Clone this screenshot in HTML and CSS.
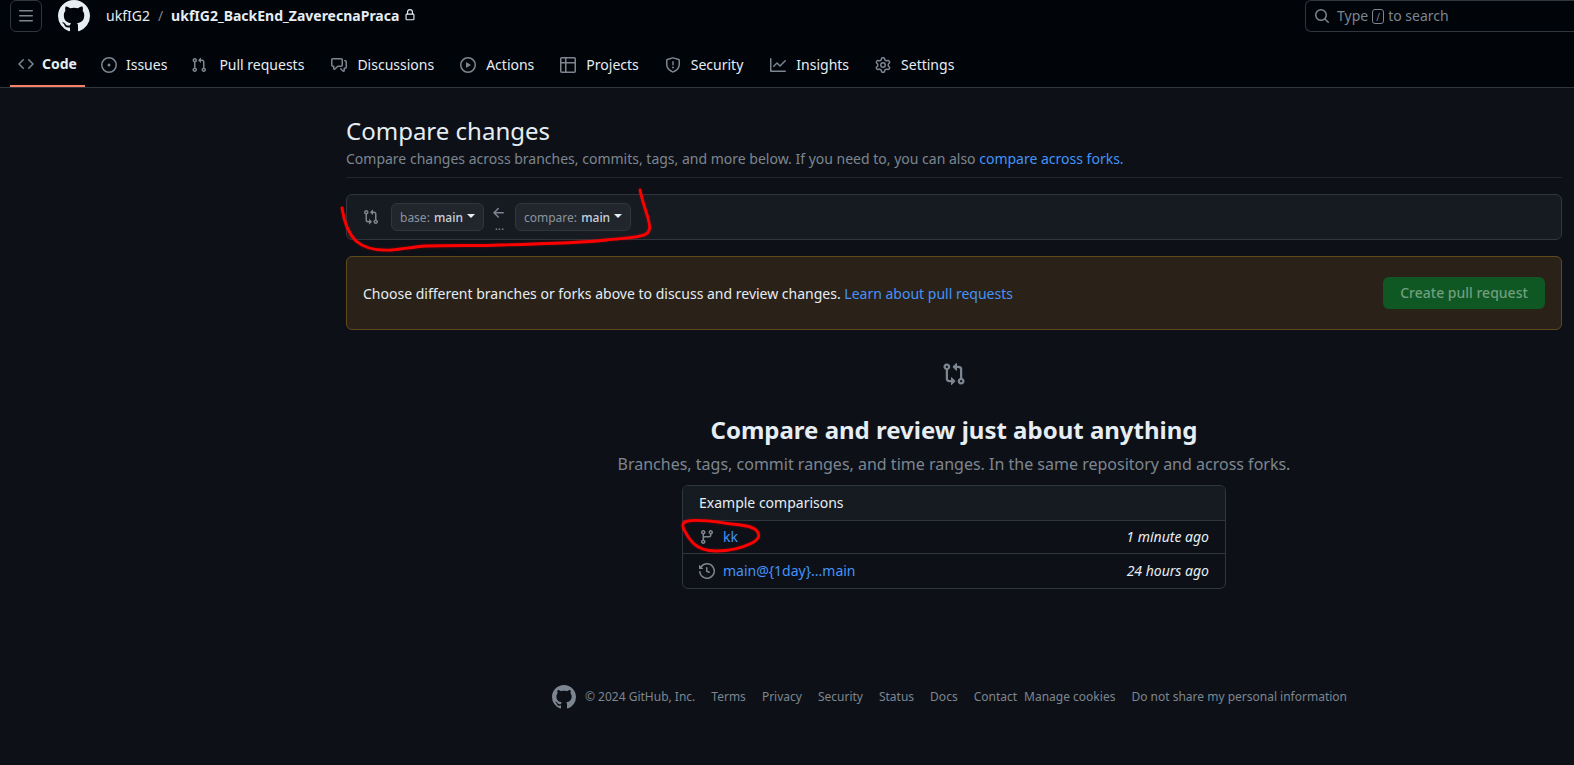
FILE: index.html
```html
<!DOCTYPE html>
<html lang="en">
<head>
  <meta charset="UTF-8" />
  <title>Compare changes</title>
  <link rel="stylesheet" href="styles.css">
</head>
<body>
  <svg class="icon-defs" width="0" height="0">
    <symbol id="i-github" viewBox="0 0 16 16"><path d="M8 0c4.42 0 8 3.58 8 8a8.013 8.013 0 0 1-5.45 7.59c-.4.08-.55-.17-.55-.38 0-.27.01-1.13.01-2.2 0-.75-.25-1.23-.54-1.48 1.78-.2 3.65-.88 3.65-3.95 0-.88-.31-1.59-.82-2.15.08-.2.36-1.02-.08-2.12 0 0-.67-.22-2.2.82-.64-.18-1.32-.27-2-.27-.68 0-1.36.09-2 .27-1.53-1.03-2.2-.82-2.2-.82-.44 1.1-.16 1.92-.08 2.12-.51.56-.82 1.28-.82 2.15 0 3.06 1.86 3.75 3.64 3.95-.23.2-.44.55-.51 1.07-.46.21-1.61.55-2.33-.66-.15-.24-.6-.83-1.23-.82-.67.01-.27.38.01.53.34.19.73.9.82 1.13.16.45.68 1.31 2.69.94 0 .67.01 1.3.01 1.49 0 .21-.15.45-.55.38A7.995 7.995 0 0 1 0 8c0-4.42 3.58-8 8-8Z"/></symbol>
    <symbol id="i-bars" viewBox="0 0 16 16"><path d="M1 2.75A.75.75 0 0 1 1.75 2h12.5a.75.75 0 0 1 0 1.5H1.75A.75.75 0 0 1 1 2.75Zm0 5A.75.75 0 0 1 1.75 7h12.5a.75.75 0 0 1 0 1.5H1.75A.75.75 0 0 1 1 7.75ZM1.75 12h12.5a.75.75 0 0 1 0 1.5H1.75a.75.75 0 0 1 0-1.5Z"/></symbol>
    <symbol id="i-lock" viewBox="0 0 16 16"><path d="M4 4a4 4 0 0 1 8 0v2h.25c.966 0 1.75.784 1.75 1.75v5.5A1.75 1.75 0 0 1 12.25 15h-8.5A1.75 1.75 0 0 1 2 13.25v-5.5C2 6.784 2.784 6 3.75 6H4Zm8.25 3.5h-8.5a.25.25 0 0 0-.25.25v5.5c0 .138.112.25.25.25h8.5a.25.25 0 0 0 .25-.25v-5.5a.25.25 0 0 0-.25-.25ZM10.5 6V4a2.5 2.5 0 1 0-5 0v2Z"/></symbol>
    <symbol id="i-search" viewBox="0 0 16 16"><path d="M10.68 11.74a6 6 0 0 1-7.922-8.982 6 6 0 0 1 8.982 7.922l3.04 3.04a.749.749 0 0 1-.326 1.275.749.749 0 0 1-.734-.215ZM11.5 7a4.499 4.499 0 1 0-8.997 0A4.499 4.499 0 0 0 11.5 7Z"/></symbol>
    <symbol id="i-code" viewBox="0 0 16 16"><path d="m11.28 3.22 4.25 4.25a.75.75 0 0 1 0 1.06l-4.25 4.25a.749.749 0 0 1-1.275-.326.749.749 0 0 1 .215-.734L13.94 8l-3.72-3.72a.749.749 0 0 1 .326-1.275.749.749 0 0 1 .734.215Zm-6.56 0a.751.751 0 0 1 1.042.018.751.751 0 0 1 .018 1.042L2.06 8l3.72 3.72a.749.749 0 0 1-.326 1.275.749.749 0 0 1-.734-.215L.47 8.53a.75.75 0 0 1 0-1.06Z"/></symbol>
    <symbol id="i-issue" viewBox="0 0 16 16"><path d="M8 9.5a1.5 1.5 0 1 0 0-3 1.5 1.5 0 0 0 0 3Z"/><path d="M8 0a8 8 0 1 1 0 16A8 8 0 0 1 8 0ZM1.5 8a6.5 6.5 0 1 0 13 0 6.5 6.5 0 0 0-13 0Z"/></symbol>
    <symbol id="i-pull" viewBox="0 0 16 16"><path d="M1.5 3.25a2.25 2.25 0 1 1 3 2.122v5.256a2.251 2.251 0 1 1-1.5 0V5.372A2.25 2.25 0 0 1 1.5 3.25Zm5.677-.177L9.573.677A.25.25 0 0 1 10 .854V2.5h1A2.5 2.5 0 0 1 13.5 5v5.628a2.251 2.251 0 1 1-1.5 0V5a1 1 0 0 0-1-1h-1v1.646a.25.25 0 0 1-.427.177L7.177 3.427a.25.25 0 0 1 0-.354ZM3.75 2.5a.75.75 0 1 0 0 1.5.75.75 0 0 0 0-1.5Zm0 9.5a.75.75 0 1 0 0 1.5.75.75 0 0 0 0-1.5Zm8.25.75a.75.75 0 1 0 1.5 0 .75.75 0 0 0-1.5 0Z"/></symbol>
    <symbol id="i-discuss" viewBox="0 0 16 16"><path d="M1.75 1h8.5c.966 0 1.75.784 1.75 1.75v5.5A1.75 1.75 0 0 1 10.25 10H7.061l-2.574 2.573A1.458 1.458 0 0 1 2 11.543V10h-.25A1.75 1.75 0 0 1 0 8.25v-5.5C0 1.784.784 1 1.75 1ZM1.5 2.75v5.5c0 .138.112.25.25.25h1a.75.75 0 0 1 .75.75v2.19l2.72-2.72a.749.749 0 0 1 .53-.22h3.5a.25.25 0 0 0 .25-.25v-5.5a.25.25 0 0 0-.25-.25h-8.5a.25.25 0 0 0-.25.25Zm13 2a.25.25 0 0 0-.25-.25h-.5a.75.75 0 0 1 0-1.5h.5c.966 0 1.75.784 1.75 1.75v5.5A1.75 1.75 0 0 1 14.25 12H14v1.543a1.458 1.458 0 0 1-2.487 1.03L9.22 12.28a.749.749 0 0 1 .326-1.275.749.749 0 0 1 .734.215l2.22 2.22v-2.19a.75.75 0 0 1 .75-.75h1a.25.25 0 0 0 .25-.25Z"/></symbol>
    <symbol id="i-play" viewBox="0 0 16 16"><path d="M8 0a8 8 0 1 1 0 16A8 8 0 0 1 8 0ZM1.5 8a6.5 6.5 0 1 0 13 0 6.5 6.5 0 0 0-13 0Zm4.879-2.773 4.264 2.559a.25.25 0 0 1 0 .428l-4.264 2.559A.25.25 0 0 1 6 10.559V5.442a.25.25 0 0 1 .379-.215Z"/></symbol>
    <symbol id="i-table" viewBox="0 0 16 16"><path d="M0 1.75C0 .784.784 0 1.75 0h12.5C15.216 0 16 .784 16 1.75v12.5A1.75 1.75 0 0 1 14.25 16H1.75A1.75 1.75 0 0 1 0 14.25ZM6.5 6.5v8h7.75a.25.25 0 0 0 .25-.25V6.5Zm8-1.5V1.75a.25.25 0 0 0-.25-.25H6.5V5Zm-13 1.5v7.75c0 .138.112.25.25.25H5v-8ZM5 5V1.5H1.75a.25.25 0 0 0-.25.25V5Z"/></symbol>
    <symbol id="i-shield" viewBox="0 0 16 16"><path d="M7.467.133a1.748 1.748 0 0 1 1.066 0l5.25 1.68A1.75 1.75 0 0 1 15 3.48V7c0 1.566-.32 3.182-1.303 4.682-.983 1.498-2.585 2.813-5.032 3.855a1.697 1.697 0 0 1-1.33 0c-2.447-1.042-4.049-2.357-5.032-3.855C1.32 10.182 1 8.566 1 7V3.48a1.75 1.75 0 0 1 1.217-1.667Zm.61 1.429a.25.25 0 0 0-.153 0l-5.25 1.68a.25.25 0 0 0-.174.238V7c0 1.358.275 2.666 1.057 3.86.784 1.194 2.121 2.34 4.366 3.297a.196.196 0 0 0 .154 0c2.245-.956 3.582-2.104 4.366-3.298C13.225 9.666 13.5 8.36 13.5 7V3.48a.251.251 0 0 0-.174-.237l-5.25-1.68ZM8.75 4.75v3a.75.75 0 0 1-1.5 0v-3a.75.75 0 0 1 1.5 0ZM9 10.5a1 1 0 1 1-2 0 1 1 0 0 1 2 0Z"/></symbol>
    <symbol id="i-graph" viewBox="0 0 16 16"><path d="M1.5 1.75V13.5h13.75a.75.75 0 0 1 0 1.5H.75a.75.75 0 0 1-.75-.75V1.75a.75.75 0 0 1 1.5 0Zm14.28 2.53-5.25 5.25a.75.75 0 0 1-1.06 0L7 7.06 4.28 9.78a.751.751 0 0 1-1.042-.018.751.751 0 0 1-.018-1.042l3.25-3.25a.75.75 0 0 1 1.06 0L10 7.94l4.72-4.72a.751.751 0 0 1 1.042.018.751.751 0 0 1 .018 1.042Z"/></symbol>
    <symbol id="i-gear" viewBox="0 0 16 16"><path d="M8 0a8.2 8.2 0 0 1 .701.031C9.444.095 9.99.645 10.16 1.29l.288 1.107c.018.066.079.158.212.224.231.114.454.243.668.386.123.082.233.09.299.071l1.103-.303c.644-.176 1.392.021 1.82.63.27.385.506.792.704 1.218.315.675.111 1.422-.364 1.891l-.814.806c-.049.048-.098.147-.088.294.016.257.016.515 0 .772-.01.147.038.246.088.294l.814.806c.475.469.679 1.216.364 1.891a7.977 7.977 0 0 1-.704 1.217c-.428.61-1.176.807-1.82.63l-1.102-.302c-.067-.019-.177-.011-.3.071a5.909 5.909 0 0 1-.668.386c-.133.066-.194.158-.211.224l-.29 1.106c-.168.646-.715 1.196-1.458 1.26a8.006 8.006 0 0 1-1.402 0c-.743-.064-1.289-.614-1.458-1.26l-.289-1.106c-.018-.066-.079-.158-.212-.224a5.738 5.738 0 0 1-.668-.386c-.123-.082-.233-.09-.299-.071l-1.103.303c-.644.176-1.392-.021-1.82-.63a8.12 8.12 0 0 1-.704-1.218c-.315-.675-.111-1.422.363-1.891l.815-.806c.05-.048.098-.147.088-.294a6.214 6.214 0 0 1 0-.772c.01-.147-.038-.246-.088-.294l-.815-.806C.635 6.045.431 5.298.746 4.623a7.92 7.92 0 0 1 .704-1.217c.428-.61 1.176-.807 1.82-.63l1.102.302c.067.019.177.011.3-.071.214-.143.437-.272.668-.386.133-.066.194-.158.211-.224l.29-1.106C6.009.645 6.556.095 7.299.03 7.53.01 7.764 0 8 0Zm-.571 1.525c-.036.003-.108.036-.137.146l-.289 1.105c-.147.561-.549.967-.998 1.189-.173.086-.34.183-.5.29-.417.278-.97.423-1.529.27l-1.103-.303c-.109-.03-.175.016-.195.045-.22.312-.412.644-.573.99-.014.031-.021.11.059.19l.815.806c.411.406.562.957.53 1.456a4.709 4.709 0 0 0 0 .582c.032.499-.119 1.05-.53 1.456l-.815.806c-.081.08-.073.159-.059.19.162.346.353.677.573.989.02.03.085.076.195.046l1.102-.303c.56-.153 1.113-.008 1.53.27.161.107.328.204.501.29.447.222.85.629.997 1.189l.289 1.105c.029.109.101.143.137.146a6.6 6.6 0 0 0 1.142 0c.036-.003.108-.036.137-.146l.289-1.105c.147-.561.549-.967.998-1.189.173-.086.34-.183.5-.29.417-.278.97-.423 1.529-.27l1.103.303c.109.029.175-.016.195-.045.22-.313.411-.644.573-.99.014-.031.021-.11-.059-.19l-.815-.806c-.411-.406-.562-.957-.53-1.456a4.709 4.709 0 0 0 0-.582c-.032-.499.119-1.05.53-1.456l.815-.806c.081-.08.073-.159.059-.19a6.464 6.464 0 0 0-.573-.989c-.02-.03-.085-.076-.195-.046l-1.102.303c-.56.153-1.113.008-1.53-.27a4.44 4.44 0 0 0-.501-.29c-.447-.222-.85-.629-.997-1.189l-.289-1.105c-.029-.11-.101-.143-.137-.146a6.6 6.6 0 0 0-1.142 0ZM11 8a3 3 0 1 1-6 0 3 3 0 0 1 6 0ZM9.5 8a1.5 1.5 0 1 0-3.001.001A1.5 1.5 0 0 0 9.5 8Z"/></symbol>
    <symbol id="i-compare" viewBox="0 0 16 16"><path d="M9.573.677A.25.25 0 0 1 10 .854V2.5h1A2.5 2.5 0 0 1 13.5 5v5.628a2.251 2.251 0 1 1-1.5 0V5a1 1 0 0 0-1-1h-1v1.646a.25.25 0 0 1-.427.177L7.177 3.427a.25.25 0 0 1 0-.354ZM6 12v-1.646a.25.25 0 0 1 .427-.177l2.396 2.396a.25.25 0 0 1 0 .354l-2.396 2.396A.25.25 0 0 1 6 15.146V13.5H5A2.5 2.5 0 0 1 2.5 11V5.372a2.25 2.25 0 1 1 1.5 0V11a1 1 0 0 0 1 1ZM4 3.25a.75.75 0 1 0-1.5 0 .75.75 0 0 0 1.5 0ZM12.75 12a.75.75 0 1 0 0 1.5.75.75 0 0 0 0-1.5Z"/></symbol>
    <symbol id="i-arrow" viewBox="0 0 16 16"><path d="M7.78 12.53a.75.75 0 0 1-1.06 0L2.47 8.28a.75.75 0 0 1 0-1.06l4.25-4.25a.751.751 0 0 1 1.042.018.751.751 0 0 1 .018 1.042L4.81 7h7.44a.75.75 0 0 1 0 1.5H4.81l2.97 2.97a.75.75 0 0 1 0 1.06Z"/></symbol>
    <symbol id="i-branch" viewBox="0 0 16 16"><path d="M9.5 3.25a2.25 2.25 0 1 1 3 2.122V6A2.5 2.5 0 0 1 10 8.5H6a1 1 0 0 0-1 1v1.128a2.251 2.251 0 1 1-1.5 0V5.372a2.25 2.25 0 1 1 1.5 0v1.836A2.493 2.493 0 0 1 6 7h4a1 1 0 0 0 1-1v-.628A2.25 2.25 0 0 1 9.5 3.25Zm-6 0a.75.75 0 1 0 1.5 0 .75.75 0 0 0-1.5 0Zm8.25-.75a.75.75 0 1 0 0 1.5.75.75 0 0 0 0-1.5ZM4.25 12a.75.75 0 1 0 0 1.5.75.75 0 0 0 0-1.5Z"/></symbol>
    <symbol id="i-history" viewBox="0 0 16 16"><path d="m.427 1.927 1.215 1.215a8.002 8.002 0 1 1-1.6 5.685.75.75 0 1 1 1.493-.154 6.5 6.5 0 1 0 1.18-4.458l1.358 1.358A.25.25 0 0 1 3.896 6H.25A.25.25 0 0 1 0 5.75V2.104a.25.25 0 0 1 .427-.177ZM7.75 4a.75.75 0 0 1 .75.75v2.992l2.028.812a.75.75 0 0 1-.557 1.392l-2.5-1A.751.751 0 0 1 7 8.25v-3.5A.75.75 0 0 1 7.75 4Z"/></symbol>
  </svg>

  <header class="header">
    <div class="topbar">
      <button class="menu-btn"><svg class="icon"><use href="#i-bars"/></svg></button>
      <svg class="logo"><use href="#i-github"/></svg>
      <div class="crumbs">
        <a class="owner">ukfIG2</a>
        <span class="slash">/</span>
        <a class="repo">ukfIG2_BackEnd_ZaverecnaPraca</a>
        <svg class="lock"><use href="#i-lock"/></svg>
      </div>
      <div class="search">
        <svg class="icon"><use href="#i-search"/></svg>
        <span>Type</span><kbd class="slash-key">/</kbd><span>to search</span>
      </div>
    </div>
    <nav class="tabs">
      <a class="tab active"><svg class="icon"><use href="#i-code"/></svg>Code</a>
      <a class="tab tab-issues"><svg class="icon"><use href="#i-issue"/></svg>Issues</a>
      <a class="tab tab-pulls"><svg class="icon"><use href="#i-pull"/></svg>Pull requests</a>
      <a class="tab tab-nudge"><svg class="icon"><use href="#i-discuss"/></svg>Discussions</a>
      <a class="tab"><svg class="icon"><use href="#i-play"/></svg>Actions</a>
      <a class="tab"><svg class="icon"><use href="#i-table"/></svg>Projects</a>
      <a class="tab"><svg class="icon"><use href="#i-shield"/></svg>Security</a>
      <a class="tab tab-nudge"><svg class="icon"><use href="#i-graph"/></svg>Insights</a>
      <a class="tab"><svg class="icon"><use href="#i-gear"/></svg>Settings</a>
    </nav>
  </header>

  <main class="main">
    <div class="subhead">
      <h1>Compare changes</h1>
      <p>Compare changes across branches, commits, tags, and more below. If you need to, you can also <a class="link">compare across forks.</a></p>
    </div>

    <div class="range-box">
      <svg class="icon range-icon"><use href="#i-compare"/></svg>
      <button class="ref-btn">base: <b>main</b><i class="caret"></i></button>
      <div class="range-sep">
        <svg class="icon"><use href="#i-arrow"/></svg>
        <span>...</span>
      </div>
      <button class="ref-btn">compare: <b>main</b><i class="caret"></i></button>
    </div>

    <div class="flash">
      <p>Choose different branches or forks above to discuss and review changes. <a class="link">Learn about pull requests</a></p>
      <button class="create-btn">Create pull request</button>
    </div>

    <div class="blankslate">
      <svg class="blank-icon"><use href="#i-compare"/></svg>
      <h2>Compare and review just about anything</h2>
      <p>Branches, tags, commit ranges, and time ranges. In the same repository and across forks.</p>

      <div class="examples">
        <div class="examples-head">Example comparisons</div>
        <div class="example-row">
          <svg class="icon"><use href="#i-branch"/></svg>
          <a class="link">kk</a>
          <em>1 minute ago</em>
        </div>
        <div class="example-row">
          <svg class="icon"><use href="#i-history"/></svg>
          <a class="link">main@{1day}...main</a>
          <em>24 hours ago</em>
        </div>
      </div>
    </div>

    <footer class="footer">
      <svg class="footer-logo"><use href="#i-github"/></svg>
      <span class="copy">© 2024 GitHub, Inc.</span>
      <a>Terms</a>
      <a>Privacy</a>
      <a>Security</a>
      <a>Status</a>
      <a>Docs</a>
      <a class="contact">Contact</a>
      <a class="cookies">Manage cookies</a>
      <a>Do not share my personal information</a>
    </footer>
  </main>

  <!-- red marker scribbles drawn on top of the screenshot -->
  <svg class="scribble" viewBox="0 0 1574 765">
    <path d="M342 208C344 222 349 234 356 241C364 248 376 251 392 250C404 249 412 247 426 246C450 245 478 246 500 245C540 244 580 243 606 240C622 238 640 238 646 234C651 231 650 226 648 218C645 208 642 200 640 190"/>
    <path d="M686 533C682 527 681 522 688 521C700 519 716 522 732 524C742 525 752 526 756 530C761 535 759 539 752 543C742 548 730 551 716 551C704 551 698 548 693 543C690 539 687 536 686 533"/>
  </svg>
</body>
</html>
```

FILE: styles.css
```css
* {
  box-sizing: border-box;
}

body {
  margin: 0;
  height: 765px;
  overflow: hidden;
  position: relative;
  background-color: #0d1117;
  color: #e6edf3;
  font-family: "Noto Sans", sans-serif;
  font-size: 14px;
  line-height: 20px;
}

.icon-defs {
  position: absolute;
}

.icon {
  width: 16px;
  height: 16px;
  flex: none;
  fill: #7d8590;
}

.link {
  color: #4493f8;
}

/* header */
.header {
  height: 88px;
  background-color: #010409;
  border-bottom: 1px solid #30363d;
}

.topbar {
  display: flex;
  align-items: center;
  height: 32px;
  padding-left: 10px;
}

.menu-btn {
  display: flex;
  align-items: center;
  justify-content: center;
  width: 32px;
  height: 32px;
  padding: 0;
  background: none;
  border: 1px solid #30363d;
  border-radius: 6px;
}

.logo {
  width: 32px;
  height: 32px;
  margin-left: 16px;
  fill: #e6edf3;
}

.crumbs {
  display: flex;
  align-items: center;
  margin-left: 16px;
  padding-bottom: 1px;
}

.owner {
  color: #e6edf3;
}

.slash {
  margin: 0 8px;
  color: #7d8590;
}

.repo {
  font-weight: 700;
}

.lock {
  width: 12px;
  height: 12px;
  margin-left: 5px;
  margin-bottom: 1px;
  fill: #e6edf3;
}

.search {
  display: flex;
  align-items: center;
  gap: 4px;
  width: 269px;
  height: 32px;
  margin-left: auto;
  padding-left: 8px;
  color: #7d8590;
  border: 1px solid #30363d;
  border-right: none;
  border-radius: 6px 0 0 6px;
}

.search .icon {
  margin-right: 3px;
}

.slash-key {
  width: 12px;
  height: 15px;
  font: 10px/14px "Noto Sans", sans-serif;
  text-align: center;
  border: 1px solid #7d8590;
  border-radius: 3px;
}

.tabs {
  display: flex;
  gap: 10px;
  height: 55px;
  padding-left: 10px;
}

.tab {
  display: flex;
  align-items: center;
  gap: 10px;
  height: 55px;
  padding: 10px 8px 0;
  color: #e6edf3;
}

.tab.active {
  gap: 8px;
  font-weight: 700;
  border-bottom: 2px solid #f78166;
}

.tab-issues {
  gap: 9px;
  margin-left: -2px;
}

.tab-pulls {
  gap: 12px;
  margin-left: -2px;
}

.tab-nudge {
  margin-left: 1px;
}

/* main column */
.main {
  margin: 0 12px 0 346px;
}

.subhead {
  height: 90px;
  padding-top: 25px;
  border-bottom: 1px solid #21262d;
}

.subhead h1 {
  margin: 0;
  font-size: 24px;
  line-height: 36px;
  font-weight: 400;
}

.subhead p {
  margin: 0;
  color: #7d8590;
}

.range-box {
  display: flex;
  align-items: center;
  height: 46px;
  margin-top: 16px;
  padding: 0 16px;
  background-color: #161b22;
  border: 1px solid #30363d;
  border-radius: 6px;
}

.range-icon {
  margin-right: 12px;
}

.ref-btn {
  display: flex;
  align-items: center;
  height: 28px;
  padding: 1px 8px 0;
  color: #8b949e;
  font: 12px/18px "Noto Sans", sans-serif;
  white-space: pre;
  background-color: #21262d;
  border: 1px solid #30363d;
  border-radius: 6px;
}

.ref-btn b {
  margin-left: 1px;
  font-weight: 500;
  color: #c9d1d9;
}

.caret {
  width: 0;
  height: 0;
  margin-left: 4px;
  margin-bottom: 4px;
  border-style: solid;
  border-width: 4px 4px 0;
  border-color: #e6edf3 transparent transparent;
}

.range-sep {
  display: flex;
  flex-direction: column;
  align-items: center;
  width: 31px;
  padding-top: 2px;
  color: #7d8590;
  font-size: 12px;
  line-height: 10px;
}

.flash {
  display: flex;
  align-items: center;
  justify-content: space-between;
  height: 74px;
  margin-top: 16px;
  padding: 0 16px;
  background-color: #2a2218;
  border: 1px solid #5f4a1c;
  border-radius: 6px;
}

.flash p {
  margin: 0;
  padding-top: 2px;
}

.create-btn {
  width: 162px;
  height: 32px;
  color: #6f9f7c;
  font: 500 14px/20px "Noto Sans", sans-serif;
  background-color: #105823;
  border: none;
  border-radius: 6px;
}

.blankslate {
  display: flex;
  flex-direction: column;
  align-items: center;
  padding-top: 32px;
}

.blank-icon {
  width: 24px;
  height: 24px;
  fill: #7d8590;
}

.blankslate h2 {
  margin: 26px 0 0;
  font-size: 24px;
  line-height: 36px;
  font-weight: 700;
}

.blankslate p {
  margin: 4px 0 0;
  color: #7d8590;
  font-size: 16px;
  line-height: 24px;
}

.examples {
  width: 544px;
  margin-top: 9px;
  border: 1px solid #30363d;
  border-radius: 6px;
}

.examples-head {
  height: 35px;
  padding: 7px 16px;
  background-color: #161b22;
  border-bottom: 1px solid #30363d;
  border-radius: 6px 6px 0 0;
}

.example-row {
  display: flex;
  align-items: center;
  gap: 8px;
  height: 33px;
  padding: 0 16px;
  border-bottom: 1px solid #30363d;
}

.example-row:first-of-type .link {
  padding-top: 1px;
}

.example-row:last-child {
  height: 34px;
  padding-bottom: 1px;
  border-bottom: none;
}

.example-row em {
  margin-left: auto;
}

.footer {
  display: flex;
  align-items: center;
  gap: 16px;
  height: 24px;
  margin: 96px 0 0 206px;
  color: #7d8590;
  font-size: 12px;
}

.footer-logo {
  width: 24px;
  height: 24px;
  margin-right: -7px;
  fill: #7d8590;
}

.contact {
  margin-right: -9px;
}

/* sits over the whole page */
.scribble {
  position: absolute;
  top: 0;
  left: 0;
  width: 1574px;
  height: 765px;
  pointer-events: none;
  filter: drop-shadow(0 0 1px rgba(255, 0, 0, 0.35));
}

.scribble path {
  fill: none;
  stroke: #f00;
  stroke-width: 2.8;
  stroke-linecap: round;
  stroke-linejoin: round;
}
```
